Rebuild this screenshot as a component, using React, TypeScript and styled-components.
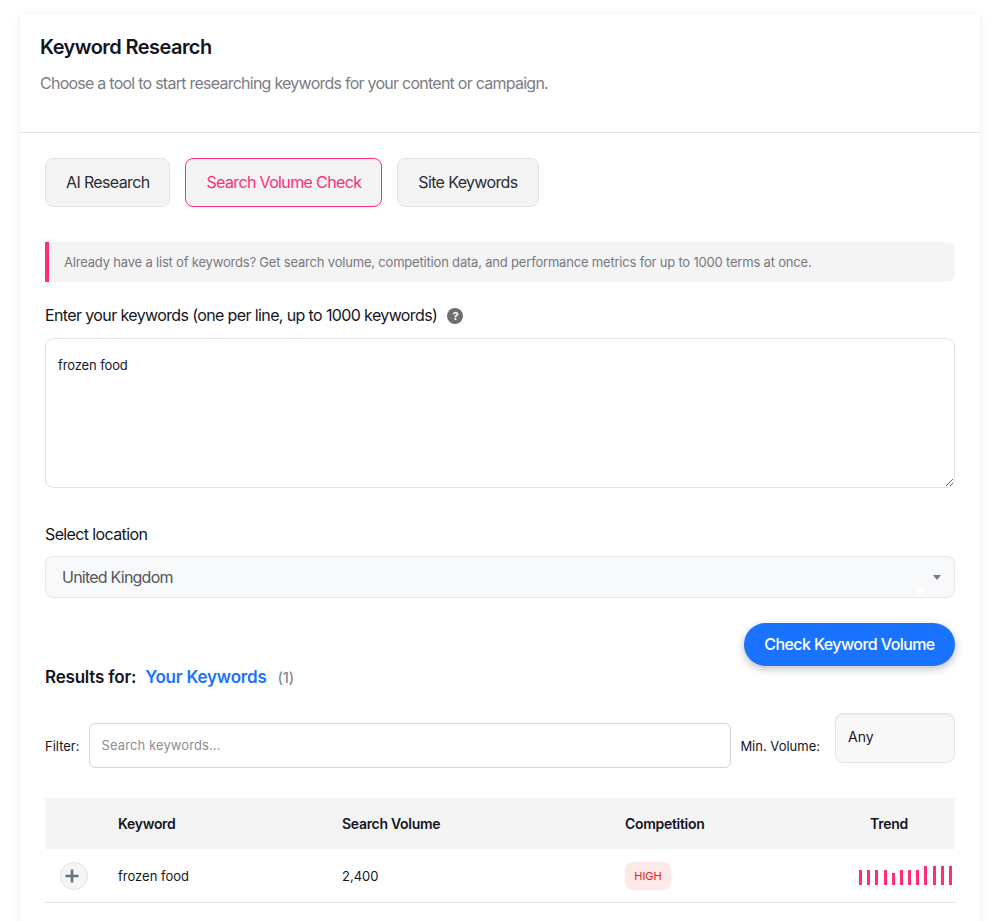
import React from "react";
import styled, { createGlobalStyle } from "styled-components";

const tabs = ["AI Research", "Search Volume Check", "Site Keywords"];
const trend = [15, 15, 15, 15, 12, 15, 15, 15, 19, 19, 19, 19];

const App: React.FC = () => {
  return (
    <>
      <GlobalStyle />
      <StCard>
        <StHeader>
          <StTitle>Keyword Research</StTitle>
          <StSubtitle>
            Choose a tool to start researching keywords for your content or campaign.
          </StSubtitle>
        </StHeader>
        <StBody>
          <StTabs>
            {tabs.map((tab) => (
              <StTab key={tab} $active={tab === "Search Volume Check"}>
                {tab}
              </StTab>
            ))}
          </StTabs>
          <StNotice>
            Already have a list of keywords? Get search volume, competition data, and
            performance metrics for up to 1000 terms at once.
          </StNotice>
          <StLabel>
            Enter your keywords (one per line, up to 1000 keywords)
            <StHelp>?</StHelp>
          </StLabel>
          <StTextarea defaultValue="frozen food" />
          <StLocationLabel>Select location</StLocationLabel>
          <StSelectWrap>
            <StSelect defaultValue="United Kingdom">
              <option>United Kingdom</option>
            </StSelect>
            <StStrayMark width="9" height="9" viewBox="0 0 9 9">
              <path d="M1 1l7 7M8 1l-7 7" stroke="#fff" strokeWidth="2" />
            </StStrayMark>
          </StSelectWrap>
          <StActions>
            <StPrimary>Check Keyword Volume</StPrimary>
          </StActions>
          <StResultsTitle>
            Results for:
            <StResultsName>Your Keywords</StResultsName>
            <StResultsCount>(1)</StResultsCount>
          </StResultsTitle>
          <StFilterRow>
            <StFilterLabel>Filter:</StFilterLabel>
            <StFilterInput placeholder="Search keywords..." />
            <StFilterLabel>Min. Volume:</StFilterLabel>
            <StVolume>Any</StVolume>
          </StFilterRow>
          <StTable>
            <thead>
              <tr>
                <StHeadCell $width={73} />
                <StHeadCell $width={224}>Keyword</StHeadCell>
                <StHeadCell $width={283}>Search Volume</StHeadCell>
                <StHeadCell $width={210}>Competition</StHeadCell>
                <StTrendHead>Trend</StTrendHead>
              </tr>
            </thead>
            <tbody>
              <tr>
                <StCell>
                  <StExpand aria-label="Expand">
                    <svg width="16" height="16" viewBox="0 0 16 16">
                      <path d="M8 1.5v13M1.5 8h13" stroke="#5f7480" strokeWidth="2.6" />
                    </svg>
                  </StExpand>
                </StCell>
                <StCell>frozen food</StCell>
                <StCell>2,400</StCell>
                <StCell>
                  <StBadge>HIGH</StBadge>
                </StCell>
                <StCell>
                  <StTrend>
                    {trend.map((height, index) => (
                      <StBar key={index} style={{ height }} />
                    ))}
                  </StTrend>
                </StCell>
              </tr>
            </tbody>
          </StTable>
        </StBody>
      </StCard>
    </>
  );
};

const GlobalStyle = createGlobalStyle`
  html, body {
    margin: 0;
    height: 921px;
    overflow: hidden;
    background: #fff;
  }
  body {
    padding: 14px 20px 0;
    box-sizing: border-box;
    font-family: Inter, "Liberation Sans", sans-serif;
    color: #14151f;
  }
  * {
    box-sizing: border-box;
  }
`;

const StCard = styled.div`
  width: 960px;
  min-height: 930px;
  background: #fff;
  border-radius: 4px;
  box-shadow: 0 0 10px rgba(0, 0, 0, 0.07);
`;

const StHeader = styled.div`
  height: 119px;
  padding: 21px 20px 0;
  border-bottom: 1px solid #e3e4e6;
`;

const StTitle = styled.h1`
  margin: 0;
  font-size: 20px;
  line-height: 24px;
  font-weight: 600;
  letter-spacing: -0.57px;
`;

const StSubtitle = styled.p`
  margin: 12px 0 0;
  font-size: 16px;
  line-height: 24px;
  letter-spacing: -0.75px;
  color: #7b7c83;
`;

const StBody = styled.div`
  padding: 25px 25px 0;
`;

const StTabs = styled.div`
  display: flex;
  gap: 15px;
`;

const StTab = styled.button<{ $active?: boolean }>`
  height: 49px;
  padding: 0 20px 2px;
  border: 1px solid ${(p) => (p.$active ? "#ff2d7a" : "#e2e3e5")};
  border-radius: 8px;
  background: #f4f4f5;
  color: ${(p) => (p.$active ? "#ff2d7a" : "#2b2c33")};
  font-family: inherit;
  font-size: 16px;
  letter-spacing: -0.64px;
`;

const StNotice = styled.div`
  height: 40px;
  margin-top: 35px;
  padding-left: 15px;
  border-left: 4px solid #ff2d7a;
  border-radius: 0 8px 8px 0;
  background: #f4f4f5;
  color: #77787f;
  font-size: 13px;
  line-height: 40px;
  letter-spacing: -0.19px;
`;

const StLabel = styled.label`
  display: flex;
  align-items: center;
  margin-top: 22px;
  height: 22px;
  font-size: 16px;
  letter-spacing: -0.62px;
`;

const StHelp = styled.span`
  display: inline-flex;
  align-items: center;
  justify-content: center;
  width: 16px;
  height: 16px;
  margin: 2px 0 0 10px;
  border-radius: 50%;
  background: #6f6f6f;
  color: #fff;
  font-size: 11px;
  font-weight: 700;
`;

const StTextarea = styled.textarea`
  display: block;
  width: 100%;
  height: 150px;
  margin-top: 12px;
  padding: 17px 12px;
  border: 1px solid #e2e3e5;
  border-radius: 8px;
  background: #fff;
  color: #14151f;
  font-family: inherit;
  font-size: 13px;
  line-height: 18px;
  letter-spacing: -0.12px;
  outline: none;
`;

const StLocationLabel = styled.div`
  margin-top: 35px;
  height: 22px;
  font-size: 16px;
  line-height: 22px;
  letter-spacing: -0.62px;
`;

const StSelectWrap = styled.div`
  position: relative;
  margin-top: 11px;

  &::after {
    content: "";
    position: absolute;
    right: 14px;
    top: 19px;
    border-left: 4px solid transparent;
    border-right: 4px solid transparent;
    border-top: 5px solid #77787f;
  }
`;

const StSelect = styled.select`
  display: block;
  width: 100%;
  height: 42px;
  padding: 0 16px;
  border: 1px solid #e6e7ea;
  border-radius: 8px;
  background: #f8f9fb;
  appearance: none;
  color: #55565d;
  font-family: inherit;
  font-size: 16px;
  letter-spacing: -0.77px;
`;

const StStrayMark = styled.svg`
  position: absolute;
  right: 30px;
  bottom: 2px;
`;

const StActions = styled.div`
  display: flex;
  justify-content: flex-end;
  margin-top: 25px;
`;

const StPrimary = styled.button`
  width: 211px;
  height: 43px;
  padding: 0 0 2px;
  border: none;
  border-radius: 22px;
  background: #1a73ff;
  box-shadow: 0 3px 8px rgba(0, 0, 0, 0.25);
  color: #fff;
  font-family: inherit;
  font-size: 16px;
  font-weight: 500;
  letter-spacing: -0.58px;
`;

const StResultsTitle = styled.div`
  display: flex;
  align-items: center;
  height: 22px;
  font-size: 17px;
  font-weight: 600;
  letter-spacing: -0.2px;
`;

const StResultsName = styled.span`
  margin-left: 9px;
  color: #1a73ff;
`;

const StResultsCount = styled.span`
  margin-left: 11px;
  color: #77787f;
  font-size: 15px;
  font-weight: 400;
`;

const StFilterRow = styled.div`
  display: flex;
  align-items: center;
  gap: 10px;
  margin-top: 25px;
`;

const StFilterLabel = styled.span`
  font-size: 13px;
  white-space: nowrap;
`;

const StFilterInput = styled.input`
  flex: 1;
  height: 45px;
  margin: 0 -1px;
  padding: 0 12px 2px;
  border: 1px solid #d5d6da;
  border-radius: 6px;
  font-family: inherit;
  font-size: 13px;
  letter-spacing: 0.1px;
  outline: none;

  &::placeholder {
    color: #8d8e95;
  }
`;

const StVolume = styled.div`
  width: 120px;
  height: 50px;
  margin: 0 0 15px 5px;
  padding: 14px 12px;
  border: 1px solid #e2e3e5;
  border-radius: 8px;
  background: #f8f8f8;
  box-shadow: inset 0 1px 2px rgba(0, 0, 0, 0.05);
  font-size: 14px;
  line-height: 18px;
`;

const StTable = styled.table`
  width: 100%;
  margin-top: 20px;
  border-collapse: collapse;
  table-layout: fixed;
`;

const StHeadCell = styled.th<{ $width?: number }>`
  width: ${(p) => (p.$width ? `${p.$width}px` : "auto")};
  height: 51px;
  padding: 0;
  background: #f4f4f5;
  font-size: 14px;
  font-weight: 600;
  letter-spacing: -0.3px;
  text-align: left;
`;

const StTrendHead = styled(StHeadCell)`
  padding-right: 12px;
  text-align: center;
`;

const StCell = styled.td`
  height: 53px;
  padding: 2px 0 0;
  border-bottom: 1px solid #e3e4e6;
  font-size: 13px;
`;

const StExpand = styled.button`
  display: flex;
  align-items: center;
  justify-content: center;
  width: 28px;
  height: 28px;
  margin-left: 15px;
  padding: 0 4px 0 0;
  border: 1px solid #e2e3e5;
  border-radius: 50%;
  background: #f4f5f5;
`;

const StBadge = styled.span`
  display: inline-block;
  width: 46px;
  height: 28px;
  border-radius: 8px;
  background: #fde8e8;
  color: #dc2626;
  font-size: 11px;
  line-height: 28px;
  text-align: center;
`;

const StTrend = styled.div`
  display: flex;
  align-items: flex-end;
  justify-content: flex-end;
  gap: 5.18px;
  height: 19px;
  margin-top: -2px;
  padding-right: 3px;
`;

const StBar = styled.span`
  width: 3px;
  background: #ff2d7a;
`;

export default App;
